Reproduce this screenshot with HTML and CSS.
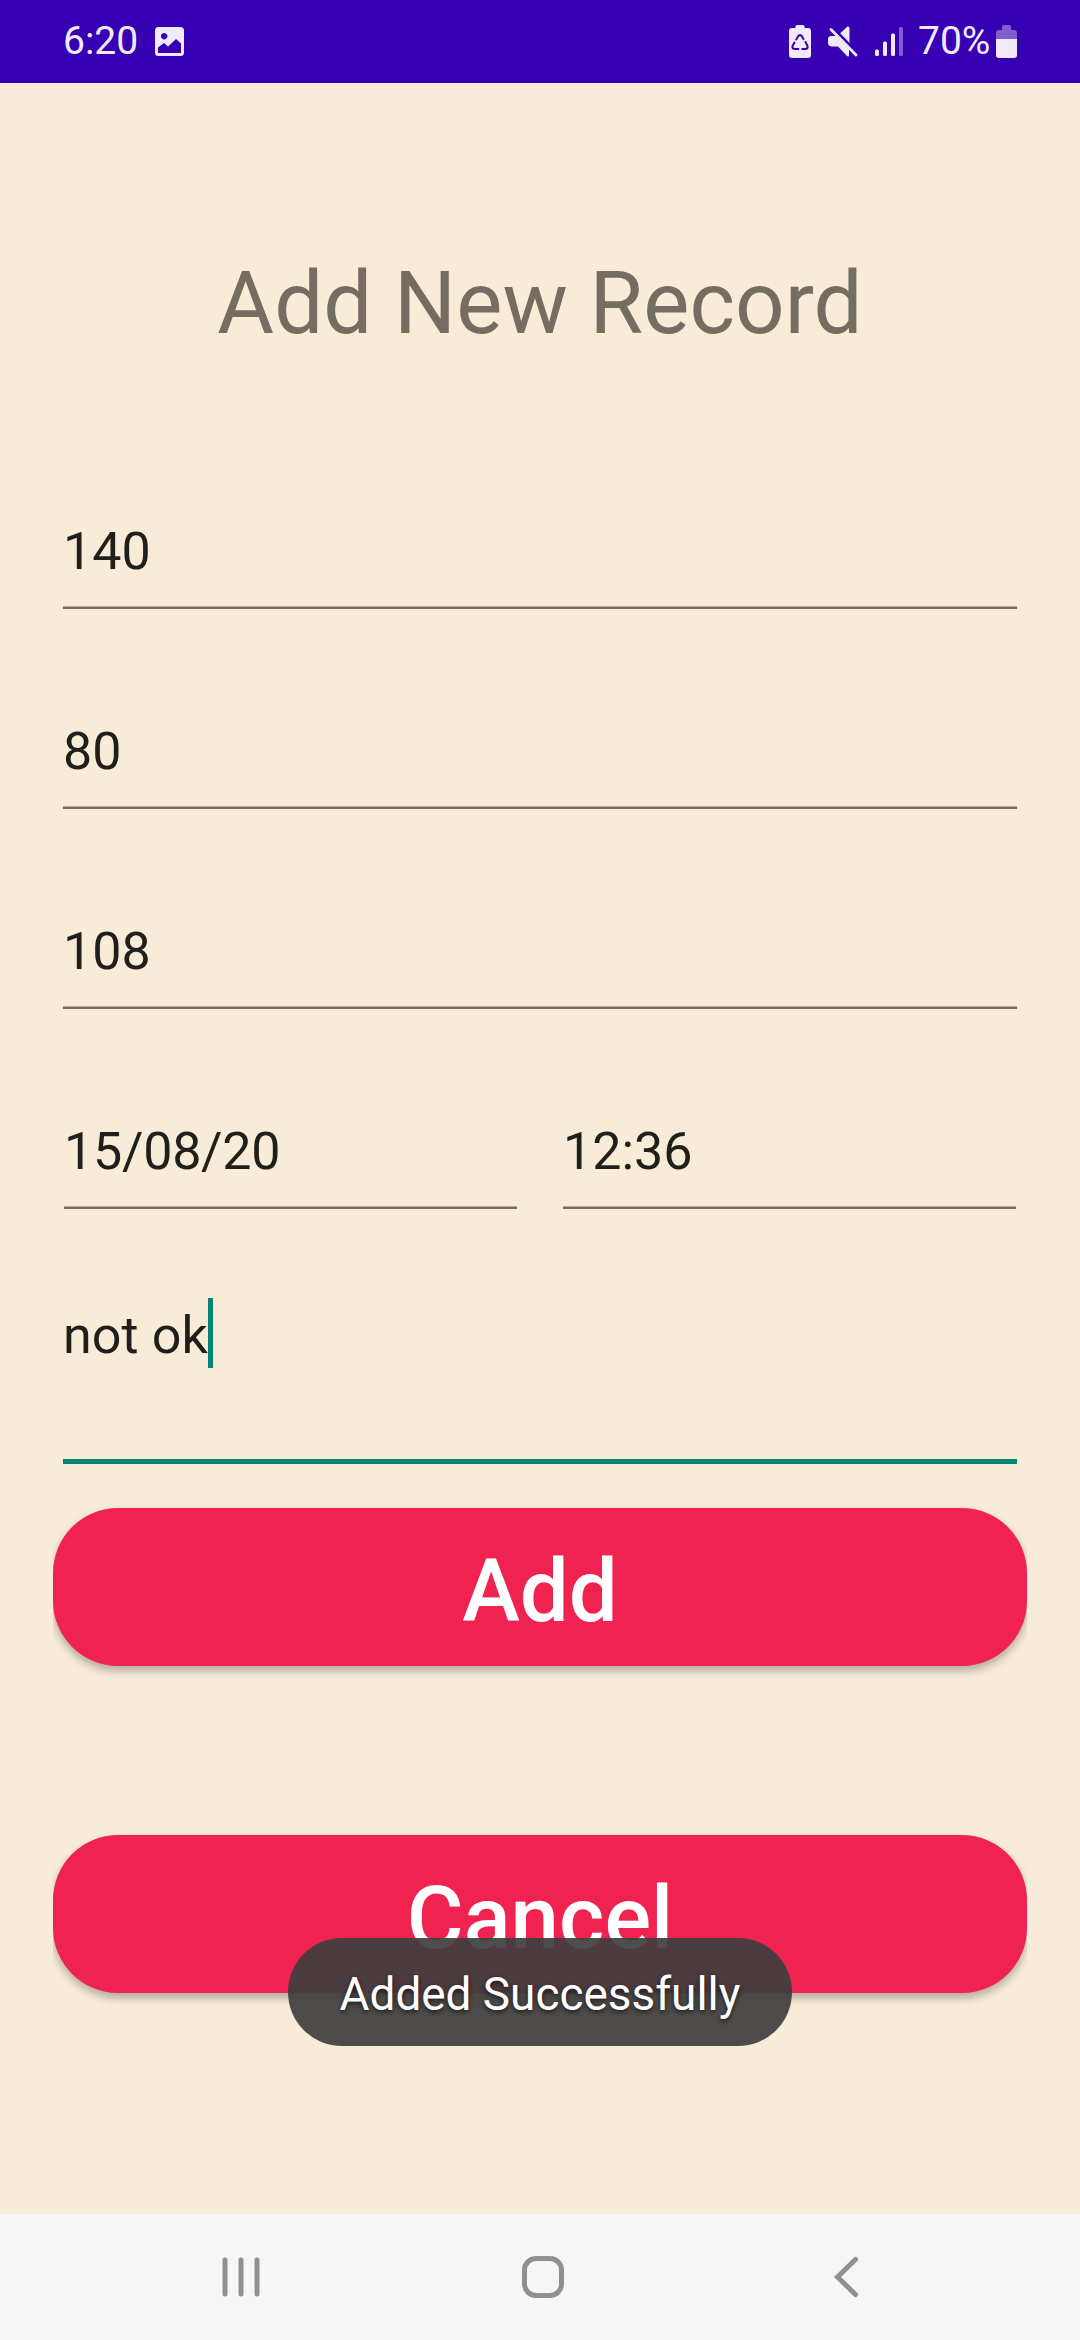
FILE: index.html
```html
<!DOCTYPE html>
<html lang="en">
<head>
<meta charset="utf-8">
<title>Add New Record</title>
<link rel="stylesheet" href="styles.css">
</head>
<body>
<div class="screen">
  <header class="status">
    <span class="clock">6:20</span>
    <svg class="picture" width="29" height="29" viewBox="0 0 29 29">
      <path fill="currentColor" fill-rule="evenodd" d="M3.5 0h22A3.500 3.500 0 0 1 29 3.500v22a3.500 3.500 0 0 1-3.500 3.500h-22A3.500 3.500 0 0 1 0 25.500v-22A3.500 3.500 0 0 1 3.500 0ZM9.200 6a3.200 3.200 0 1 0 .01 0ZM3 20.500V26h23V16.500L21 12l-8 7.500L9 16Z"/>
    </svg>
    <span class="spacer"></span>
    <svg class="recycle" width="22" height="33" viewBox="0 0 22 33">
      <path fill="currentColor" d="M6.500 3V1.500Q6.500 0 8 0h6q1.500 0 1.500 1.500V3H19q3 0 3 3v24q0 3-3 3H3q-3 0-3-3V6q0-3 3-3Z"/>
      <g class="arrows"><path d="M7.200 14.500 9.500 10.800q1.500-1.700 3 0l2 3.300"/><path d="M16.500 17l2 4q.8 3-2.500 3h-2.700"/><path d="M9.300 24H6q-3.200 0-2.500-3l2-3.500"/></g>
    </svg>
    <svg class="mute" width="30" height="31" viewBox="0 0 30 31">
      <path fill="currentColor" d="M3.500 10H8l13 13.500V30q-1 .8-2 0l-9-9.500H3.500Q0 20 0 17v-4q0-3 3.500-3ZM12 7.500 19.500.6Q21.500 0 21.500 2v15.500Z"/>
      <path fill="none" stroke="#3700b3" stroke-width="2" d="M4.500 1 29 26"/>
      <path fill="none" stroke="currentColor" stroke-width="2.800" stroke-linecap="round" d="M3 3.500 28 29"/>
    </svg>
    <svg class="signal" width="28" height="29" viewBox="0 0 28 29">
      <g fill="currentColor"><rect y="22.500" width="4" height="6.500" rx="1.500"/><rect x="8" y="14.500" width="4" height="14.500" rx="1.500"/><rect x="16" y="6.500" width="4" height="22.500" rx="1.500"/><rect x="24" width="4" height="29" rx="1.500" opacity=".4"/></g>
    </svg>
    <span class="percent">70%</span>
    <svg class="battery" width="21" height="33" viewBox="0 0 21 33">
      <path fill="currentColor" opacity=".4" d="M0 14V8q0-3 3-3h3V1.500Q6 0 7.500 0h6Q15 0 15 1.500V5h3q3 0 3 3v6Z"/>
      <path fill="currentColor" d="M0 14h21v16q0 3-3 3H3q-3 0-3-3Z"/>
    </svg>
  </header>

  <main class="form">
    <h1 class="title">Add New Record</h1>
    <div class="fields">
      <div class="field">140</div>
      <div class="field">80</div>
      <div class="field">108</div>
      <div class="pair">
        <div class="field date">15/08/20</div>
        <div class="field">12:36</div>
      </div>
    </div>
    <div class="note"><span>not ok</span><i class="caret"></i></div>
    <button class="action">Add</button>
    <button class="action cancel">Cancel</button>
  </main>

  <nav class="nav">
    <svg width="38" height="42" viewBox="0 0 38 42"><path d="M3 4v34M19 4v34M35 4v34"/></svg>
    <svg class="home" width="42" height="42" viewBox="0 0 42 42"><rect x="2.500" y="2.500" width="37" height="37" rx="11.500"/></svg>
    <svg width="26" height="42" viewBox="0 0 26 42"><path d="M22.500 3.500 4.500 21l18 17.500"/></svg>
  </nav>

  <div class="toast">Added Successfully</div>
</div>
</body>
</html>
```
FILE: styles.css
```css
* { box-sizing: border-box; }

body {
  margin: 0;
  font-family: Roboto, sans-serif;
  background: #f8ebd8;
}

svg { display: block; flex: none; }

.screen {
  position: relative;
  display: flex;
  flex-direction: column;
  width: 1080px;
  height: 2340px;
  overflow: hidden;
}

.status {
  display: flex;
  align-items: flex-start;
  height: 83px;
  padding: 25px 63px 0 63px;
  background: #3700b3;
  color: #f1eafc;
  font-size: 39px;
  line-height: 32px;
  white-space: nowrap;
}

.clock { width: 92px; }
.spacer { flex: 1; }
.picture { margin-top: 2px; }
.recycle { margin-right: 17px; }
.mute { margin: 1px 17px 0 0; }
.signal { margin: 2px 15px 0 0; }
.percent { width: 78px; }

.arrows {
  fill: none;
  stroke: #3700b3;
  stroke-width: 2;
  stroke-linecap: round;
}

.form {
  flex: 1;
  padding: 170px 53px 0;
}

.title {
  margin: 0 0 168px;
  font-size: 87px;
  font-weight: 400;
  line-height: 100px;
  letter-spacing: .08px;
  text-align: center;
  color: #756d62;
}

.fields {
  display: flex;
  flex-direction: column;
  gap: 112px;
  padding: 0 10px;
}

.field {
  height: 88px;
  font-size: 52px;
  line-height: 62px;
  color: #211f1b;
  background: linear-gradient(#b6aca0 0 1px, #756d62 1px) bottom / 100% 3px no-repeat;
}

.date { letter-spacing: -.25px; }

.pair {
  display: grid;
  grid-template-columns: 1fr 1fr;
  gap: 46px;
  padding: 0 1px;
}

.note {
  display: flex;
  height: 175px;
  margin: 80px 10px 44px;
  padding-top: 9px;
  border-bottom: 5px solid #058576;
  font-size: 52px;
  line-height: 76px;
  letter-spacing: .1px;
  color: #211f1b;
}

.caret {
  width: 5px;
  height: 70px;
  background: #058576;
}

.action {
  display: block;
  width: 100%;
  height: 158px;
  padding: 8px 0 0;
  border: 0;
  border-radius: 65px;
  background: #f02250;
  color: #fff;
  font: 500 87px/100px Roboto, sans-serif;
  box-shadow: 0 5px 8px rgba(0, 0, 0, .27);
  clip-path: inset(-10px 0 -20px);
}

.cancel { margin-top: 169px; }

.nav {
  display: flex;
  justify-content: space-between;
  height: 126px;
  padding: 42px 221px 0 222px;
  background: #f6f6f6;
}

.nav svg {
  fill: none;
  stroke: #909090;
  stroke-width: 5;
  stroke-linecap: round;
}

.nav .home { margin-right: 7px; }

.toast {
  position: absolute;
  top: 1938px;
  left: 288px;
  width: 504px;
  height: 108px;
  border-radius: 54px;
  background: rgba(62, 62, 62, .92);
  color: #fff;
  font-size: 45.9px;
  line-height: 112px;
  text-align: center;
  text-shadow: 0 2px 5px rgba(0, 0, 0, .7);
}
```
